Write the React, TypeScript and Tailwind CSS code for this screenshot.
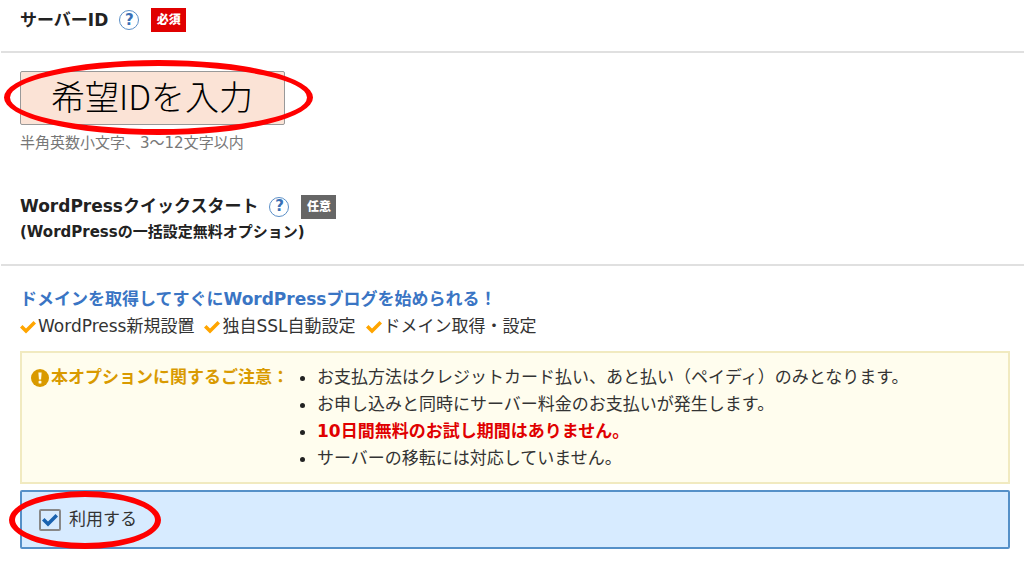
import type { ReactNode } from "react";

const features = ["WordPress新規設置", "独自SSL自動設定", "ドメイン取得・設定"];

const notices = [
  { text: "お支払方法はクレジットカード払い、あと払い（ペイディ）のみとなります。" },
  { text: "お申し込みと同時にサーバー料金のお支払いが発生します。" },
  { text: "10日間無料のお試し期間はありません。", strong: true },
  { text: "サーバーの移転には対応していません。" },
];

function CheckIcon({ className }: { className: string }) {
  return (
    <svg viewBox="0 0 16 16" fill="currentColor" aria-hidden="true" className={className}>
      <path d="M13.5 2 6 9.5 2.5 6 0 8.5l6 6 10-10z" />
    </svg>
  );
}

function NoticeIcon({ className }: { className: string }) {
  return (
    <svg viewBox="0 0 18 18" aria-hidden="true" className={className}>
      <circle cx="9" cy="9" r="9" fill="currentColor" />
      <path d="M7.4 3.5h3.2l-.5 7H7.9z" fill="#fffdee" />
      <rect x="7.6" y="11.8" width="2.8" height="2.7" rx=".6" fill="#fffdee" />
    </svg>
  );
}

function HelpButton({ label }: { label: string }) {
  return (
    <button
      type="button"
      aria-label={label}
      className="flex h-5 w-5 shrink-0 items-center justify-center rounded-full border border-[#5b8fc7] text-[15px] leading-none font-bold text-[#3a70b5]"
    >
      ?
    </button>
  );
}

function Badge({ className, children }: { className: string; children: ReactNode }) {
  return (
    <span className={`flex h-6 w-[35px] shrink-0 items-center justify-center text-xs font-black text-white ${className}`}>
      {children}
    </span>
  );
}

/* Red ring drawn over the field it sits in */
function Ring({ className }: { className: string }) {
  return (
    <span
      aria-hidden="true"
      className={`pointer-events-none absolute rounded-[50%] border-6 border-[#ff0000] ${className}`}
    />
  );
}

export default function App() {
  return (
    <main className="min-h-screen bg-white pb-5 font-['DejaVu_Sans','Noto_Sans_CJK_JP',sans-serif] text-[17px] leading-[27px] text-[#333]">
      {/* Server ID */}
      <section>
        <header className="ml-px flex items-center border-b-2 border-[#e0e0e0] pt-2 pb-[19px] pl-[19px]">
          <label htmlFor="server-id" className="h-6 leading-6 font-bold text-[#222]">
            サーバーID
          </label>
          <div className="ml-[11px] flex items-center gap-3">
            <HelpButton label="サーバーIDについて" />
            <Badge className="bg-[#e00000]">必須</Badge>
          </div>
        </header>
        <div className="px-5 pt-[18px]">
          <div className="relative w-[265px]">
            <input
              id="server-id"
              type="text"
              defaultValue="希望IDを入力"
              className="block h-[54px] w-full rounded-xs border border-[#999] bg-[#fbe3d6] pr-2 pb-1.5 pl-[30px] font-['Noto_Sans_CJK_JP',sans-serif] text-[34px] font-light text-black outline-none"
            />
            <Ring className="-top-[11px] -right-7 -bottom-[10px] -left-4" />
          </div>
          <p className="pt-[5px] text-[15px] text-[#777]">半角英数小文字、3～12文字以内</p>
        </div>
      </section>

      {/* WordPress quick start */}
      <section className="pt-9">
        <header className="ml-px border-b-2 border-[#e0e0e0] pb-5 pl-[19px] font-bold text-[#222]">
          <div className="flex items-center">
            <h2>WordPressクイックスタート</h2>
            <div className="ml-[11px] flex items-center gap-3">
              <HelpButton label="WordPressクイックスタートについて" />
              <Badge className="bg-[#666]">任意</Badge>
            </div>
          </div>
          <p className="text-[15px] leading-6">(WordPressの一括設定無料オプション)</p>
        </header>

        <div className="pt-5 pr-[14px] pl-5">
          <p className="font-bold text-[#3a75c4]">ドメインを取得してすぐにWordPressブログを始められる！</p>
          <ul className="flex flex-wrap gap-x-[10px]">
            {features.map((feature) => (
              <li key={feature} className="flex items-center gap-0.5">
                <CheckIcon className="h-4 w-4 text-[#ffa500]" />
                {feature}
              </li>
            ))}
          </ul>

          <div className="mt-[11px] flex items-start border-2 border-[#f1eac0] bg-[#fffdee] pt-[11px] pb-[10px] pl-[9px]">
            <h3 className="flex shrink-0 items-center gap-0.5 font-bold text-[#d99a00]">
              <NoticeIcon className="h-[18px] w-[18px]" />
              本オプションに関するご注意：
            </h3>
            <ul className="list-disc pl-7">
              {notices.map(({ text, strong }) => (
                <li key={text} className="marker:text-[#222]">
                  {strong ? <strong className="text-[#e00000]">{text}</strong> : text}
                </li>
              ))}
            </ul>
          </div>

          <div className="mt-[6px] flex rounded-xs border-2 border-[#5590c8] bg-[#d7ebff] py-[14px] pl-[17px]">
            <label className="relative flex items-center gap-2">
              <span className="relative flex h-[22px] w-[22px]">
                <input
                  type="checkbox"
                  defaultChecked
                  className="peer h-[22px] w-[22px] appearance-none rounded-xs border-2 border-[#888] bg-[#d7ebff]"
                />
                <CheckIcon className="pointer-events-none absolute top-[3px] left-[3px] hidden h-4 w-4 text-[#1a63b0] peer-checked:block" />
              </span>
              利用する
              <Ring className="-top-[15px] -right-6 -bottom-4 -left-[30px]" />
            </label>
          </div>
        </div>
      </section>
    </main>
  );
}
